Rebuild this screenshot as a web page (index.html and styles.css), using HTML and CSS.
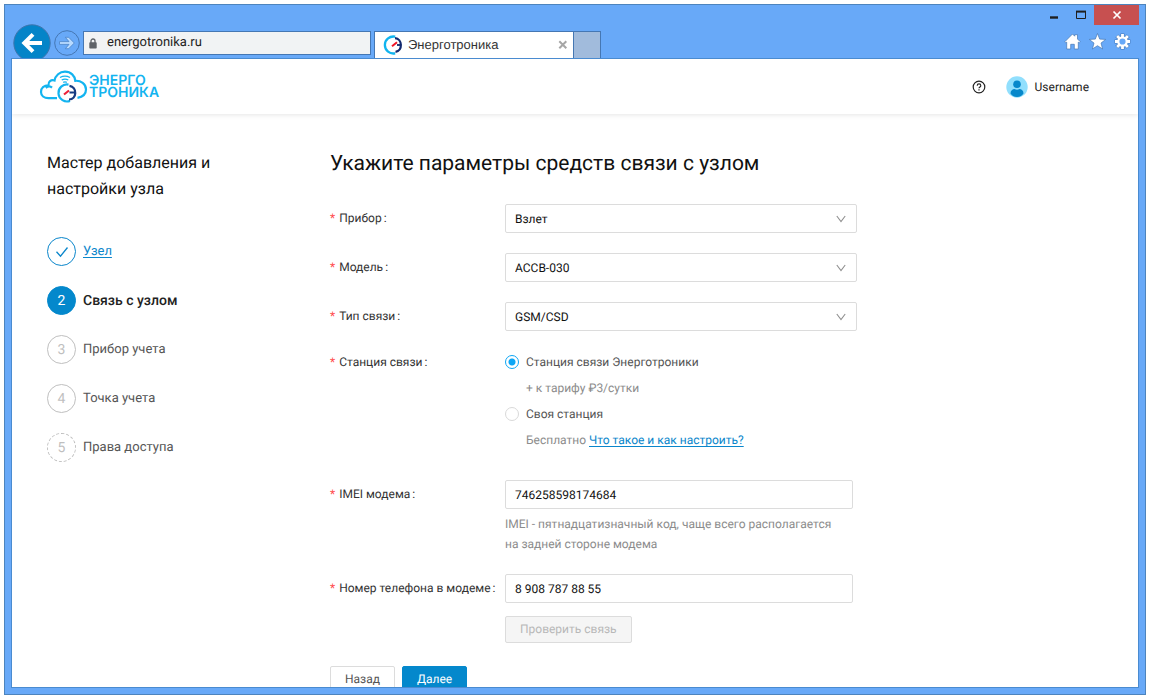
FILE: index.html
```html
<!DOCTYPE html>
<html lang="ru">
<head>
<meta charset="utf-8">
<meta name="viewport" content="width=device-width, initial-scale=1">
<title>Энерготроника</title>
<link rel="stylesheet" href="styles.css">
</head>
<body>
<div class="window">
  <div class="titlebar">
    <button class="win-btn" aria-label="Свернуть"><svg width="12" height="12" viewBox="0 0 12 12"><path d="M2 8.500h8" stroke="#1f1f1f" stroke-width="2.400"/></svg></button>
    <button class="win-btn" aria-label="Развернуть"><svg width="12" height="12" viewBox="0 0 12 12"><path d="M1.500 2.500h9v7h-9z" fill="none" stroke="#1f1f1f"/><path d="M1 2.600h10" stroke="#1f1f1f" stroke-width="2"/></svg></button>
    <button class="win-btn win-close" aria-label="Закрыть"><svg width="10" height="10" viewBox="0 0 10 10"><path d="M1.500 1.500l7 7M8.500 1.500l-7 7" stroke="#fff" stroke-width="1.700"/></svg></button>
  </div>
  <div class="toolbar">
    <button class="nav-btn" aria-label="Назад в истории"><svg width="38" height="38" viewBox="0 0 38 38"><circle cx="19" cy="19" r="18.200" fill="#0484c8" stroke="#3f75ad"/><path d="M29 19H11.500M20 10.300L11.300 19l8.700 8.700" fill="none" stroke="#fff" stroke-width="4"/></svg></button>
    <button class="nav-btn" aria-label="Вперёд"><svg width="26" height="26" viewBox="0 0 26 26"><circle cx="13" cy="13" r="12.300" fill="none" stroke="#4577b3"/><path d="M5.500 11.600h9.500l-3.700-4.300h3.400l5.600 5.700-5.600 5.700h-3.400l3.700-4.300H5.500z" fill="#b8daff" stroke="#4a83c6" stroke-width=".8"/></svg></button>
    <div class="address">
      <svg width="8" height="11" viewBox="0 0 8 11"><path d="M2 5V3a2 2 0 014 0v2" fill="none" stroke="#5f6368" stroke-width="1.300"/><rect x=".3" y="4.300" width="7.400" height="6.200" rx=".8" fill="#5f6368"/></svg>
      <input class="address-input" type="text" value="energotronika.ru" aria-label="Адрес">
    </div>
    <div class="tab">
      <svg width="20" height="20" viewBox="0 0 20 20" fill="none"><path d="M12.200 1.700A8.500 8.500 0 1012.200 18.300" stroke="#10b4ef" stroke-width="2.300"/><path d="M12 3.200C19.500 3.500 20 16 12.500 16.800" stroke="#12296f" stroke-width="2.200"/><path d="M14 10H18" stroke="#12296f" stroke-width="1.800"/><path d="M9 11.200l5-4" stroke="#f01525" stroke-width="2"/></svg>
      <span class="tab-title">Энерготроника</span>
      <button class="tab-close" aria-label="Закрыть вкладку"><svg width="10" height="10" viewBox="0 0 10 10"><path d="M1.300 1.300l7 7M8.300 1.300l-7 7" stroke="#a6a6a6" stroke-width="2"/></svg></button>
    </div>
    <button class="tab-new" aria-label="Новая вкладка"></button>
    <div class="tools">
      <button class="nav-btn" aria-label="Домой"><svg width="17" height="17" viewBox="0 0 17 17"><path d="M.8 8.800L8.500 1l2.200 2.200V1.700h2.800V6l2.800 2.800-1.100 1.100-.9-.8v6.900h-4v-4.700H6.700V16h-4V9.100l-.9.800z" fill="#fff" stroke="#4577b3" stroke-width=".7"/></svg></button>
      <button class="nav-btn" aria-label="Избранное"><svg width="17" height="17" viewBox="0 0 17 17"><path d="M8.500.500l2.200 5.600 6 .3-4.700 3.700 1.600 5.900-5.100-3.300L3.400 16 5 10.100.3 6.400l6-.3z" fill="#fff" stroke="#4577b3" stroke-width=".7"/></svg></button>
      <button class="nav-btn" aria-label="Настройки"><svg width="17" height="17" viewBox="0 0 17 17"><g stroke="#4577b3" stroke-width="4"><path d="M8.500.6v15.800M.6 8.500h15.800M2.800 2.800l11.400 11.400M14.200 2.800L2.800 14.200"/></g><g stroke="#fff" stroke-width="2.800"><path d="M8.500 1v15M1 8.500h15M3.100 3.100l10.800 10.800M13.900 3.100L3.100 13.900"/></g><circle cx="8.500" cy="8.500" r="4.200" fill="#68a9f8" stroke="#fff" stroke-width="2.200"/></svg></button>
    </div>
  </div>
  <div class="page">
    <header class="header">
      <a class="logo" href="#" aria-label="Энерготроника">
        <svg width="50" height="34" viewBox="0 0 50 34" fill="none"><path d="M18 28.200H9.500C5 28.200 2 25.500 2 22c0-4 3-6.600 7.500-6.600C9 11.500 12 9.500 15.500 10.500 16.500 5.500 20.500 1.700 26 1.700c6 0 9.800 4 10.300 9.100 5.500-.4 10.700 3 10.700 8.700 0 4.500-3.200 7.400-8.500 8.300M6.800 17.800c2.300-1.700 4.500-1.800 6.200-.2" stroke="#13b4f0" stroke-width="2.200"/><path d="M21 7.500q5-2.800 10 0M22.700 10q3.300-1.900 6.600 0M24.200 12.300q1.800-.9 3.600 0" stroke="#13b4f0" stroke-width="1.300"/><path d="M29.500 14.600A8.500 8.500 0 1031 30.900" stroke="#13b4f0" stroke-width="2.200"/><path d="M30.500 15.800C38.500 17 38 29.500 30 29.500M30.500 22.500H36" stroke="#173c82" stroke-width="2.200"/><path d="M25 24.500l5-4" stroke="#ee2037" stroke-width="2.200"/></svg>
        <span class="logo-text"><span>ЭНЕРГО</span><span>ТРОНИКА</span></span>
      </a>
      <div class="account">
        <button class="help" aria-label="Справка"><svg width="14" height="14" viewBox="0 0 14 14" fill="none" stroke="#222"><circle cx="7" cy="7" r="5.800" stroke-width="1.200"/><path d="M5.200 5.700c0-2.400 3.600-2.400 3.600 0C8.800 7 7 6.900 7 8.300" stroke-width="1.100"/><path d="M7 9.200v1.200" stroke-width="1.200"/></svg></button>
        <a class="user" href="#"><svg width="22" height="22" viewBox="0 0 22 22"><circle cx="11" cy="11" r="10.700" fill="#91dffd"/><circle cx="11" cy="8.200" r="3.800" fill="#0788cb"/><path d="M4.500 17.500c0-3 2-4.500 4-4.500 1.700 1 3.300 1 5 0 2 0 4 1.500 4 4.500-1 1.700-3.500 3.500-6.500 3.500s-5.500-1.800-6.500-3.500z" fill="#0788cb"/></svg>Username</a>
      </div>
    </header>
    <div class="layout">
      <aside class="sidebar">
        <h2 class="side-title">Мастер добавления и настройки узла</h2>
        <ol class="steps">
          <li class="step step-done"><span class="step-num"><svg width="14" height="12" viewBox="0 0 14 12"><path d="M1.500 5.800l4 4.400 7-8.700" fill="none" stroke="#0a86cb" stroke-width="1.300"/></svg></span><a class="link" href="#">Узел</a></li>
          <li class="step step-active"><span class="step-num">2</span>Связь с узлом</li>
          <li class="step"><span class="step-num">3</span>Прибор учета</li>
          <li class="step"><span class="step-num">4</span>Точка учета</li>
          <li class="step step-last"><span class="step-num">5</span>Права доступа</li>
        </ol>
      </aside>
      <main class="main">
        <h1 class="title">Укажите параметры средств связи с узлом</h1>
        <form class="form">
          <div class="row">
            <label class="label" for="device">Прибор</label>
            <div class="select-wrap"><select class="control" id="device"><option>Взлет</option></select><svg class="chevron" width="10" height="8" viewBox="0 0 10 8"><path d="M.8 1L5 6.500 9.200 1" fill="none" stroke="#8f8f8f" stroke-width="1.100"/></svg></div>
          </div>
          <div class="row">
            <label class="label" for="model">Модель</label>
            <div class="select-wrap"><select class="control" id="model"><option>АССВ-030</option></select><svg class="chevron" width="10" height="8" viewBox="0 0 10 8"><path d="M.8 1L5 6.500 9.200 1" fill="none" stroke="#8f8f8f" stroke-width="1.100"/></svg></div>
          </div>
          <div class="row">
            <label class="label" for="link-type">Тип связи</label>
            <div class="select-wrap"><select class="control" id="link-type"><option>GSM/CSD</option></select><svg class="chevron" width="10" height="8" viewBox="0 0 10 8"><path d="M.8 1L5 6.500 9.200 1" fill="none" stroke="#8f8f8f" stroke-width="1.100"/></svg></div>
          </div>
          <div class="row row-radio" role="radiogroup" aria-labelledby="station-label">
            <span class="label" id="station-label">Станция связи</span>
            <div class="radios">
              <label class="radio"><input class="radio-input" type="radio" name="station" checked>Станция связи Энерготроники</label>
              <p class="note">+ к тарифу ₽3/сутки</p>
              <label class="radio"><input class="radio-input" type="radio" name="station">Своя станция</label>
              <p class="note">Бесплатно <a class="link" href="#">Что такое и как настроить?</a></p>
            </div>
          </div>
          <div class="row">
            <label class="label" for="imei">IMEI модема</label>
            <div class="field">
              <input class="control" id="imei" type="text" value="746258598174684">
              <p class="hint">IMEI - пятнадцатизначный код, чаще всего располагается на задней стороне модема</p>
            </div>
          </div>
          <div class="row">
            <label class="label" for="phone">Номер телефона в модеме</label>
            <div class="field">
              <input class="control" id="phone" type="tel" value="8 908 787 88 55">
              <button class="btn btn-check" type="button" disabled>Проверить связь</button>
            </div>
          </div>
          <div class="actions">
            <button class="btn" type="button">Назад</button>
            <button class="btn btn-primary" type="button">Далее</button>
          </div>
        </form>
      </main>
    </div>
  </div>
</div>
</body>
</html>
```
FILE: styles.css
```css
* { box-sizing: border-box; }

body {
  margin: 0;
  padding: 4px 4px 0;
  height: 100vh;
  overflow: hidden;
  background: #fff;
  color: #222;
  font: 12px/20px Roboto, "Noto Sans", sans-serif;
  text-rendering: geometricPrecision;
}

h1, h2, p, ol { margin: 0; padding: 0; font-weight: 400; }
button, input, select { font: inherit; color: inherit; margin: 0; text-rendering: inherit; }
svg { display: block; flex: none; }

/* Browser window */
.window {
  display: flex;
  flex-direction: column;
  height: 100%;
  padding: 0 6px 6px;
  background: #68a9f8;
  border: 1px solid #4d84bd;
}
.titlebar { display: flex; justify-content: flex-end; height: 20px; flex: none; }
.win-btn {
  display: grid;
  place-items: center;
  width: 27px;
  padding: 0;
  border: 0;
  background: none;
}
.win-close { width: 45px; background: #c75050; }
.toolbar {
  display: flex;
  align-items: flex-end;
  flex: none;
  height: 33px;
  padding-left: 2px;
}
.nav-btn { padding: 0; border: 0; background: none; align-self: flex-start; }
.toolbar > .nav-btn { margin-right: 3px; }
.toolbar > .nav-btn:first-child { margin-top: -1px; height: 34px; overflow: hidden; }
.toolbar > .nav-btn:nth-child(2) { margin-top: 5px; }
.address {
  display: flex;
  align-items: center;
  gap: 10px;
  flex: 0 1 288px;
  height: 24px;
  margin: 0 3px 3px 0;
  padding: 0 5px;
  background: #f1f3f4;
  border: 1px solid #4577b3;
}
.address-input { flex: 1; min-width: 0; padding: 0; border: 0; background: none; font-size: 13px; outline: 0; }
.tab {
  display: flex;
  align-items: center;
  flex: 0 1 200px;
  height: 27px;
  padding: 0 5px 0 8px;
  background: #fff;
  border: 1px solid #4577b3;
  border-bottom: 0;
}
.tab-title { flex: 1; margin-left: 5px; font: 13px/20px "Liberation Sans", Arial, sans-serif; color: #333; }
.tab-close { padding: 0; border: 0; background: none; }
.tab-new { width: 27px; height: 27px; padding: 0; background: #a1bbdc; border: 1px solid #4577b3; border-width: 1px 1px 0 0; }
.tools { display: flex; gap: 8px; margin-left: auto; padding: 0 8px 8px 0; }

/* Site */
.page {
  flex: 1;
  min-height: 0;
  overflow: hidden;
  background: #fff;
  border: 1px solid #4a8bd0;
}
.header {
  display: flex;
  align-items: center;
  justify-content: space-between;
  height: 55px;
  padding: 0 49px 0 27px;
  box-shadow: 0 1px 5px rgba(0, 0, 0, .1);
}
.logo { display: flex; align-items: center; color: #13b4f0; text-decoration: none; }
.logo-text { display: grid; font: 600 14px/12px Inter, Roboto, sans-serif; }
.account { display: flex; align-items: center; gap: 20px; }
.help { padding: 0; border: 0; background: none; }
.user { display: flex; align-items: center; gap: 7px; color: #222; text-decoration: none; }

.layout { display: grid; grid-template-columns: 283px 1fr; padding: 36px 35px 0; }
.side-title { width: 190px; color: #111; font-size: 16px; line-height: 26px; }
.steps { display: grid; gap: 20px; margin-top: 35px; list-style: none; }
.step { display: flex; align-items: center; gap: 7px; color: #555; font-size: 13px; line-height: 28px; }
.step-num {
  display: grid;
  place-items: center;
  width: 29px;
  height: 29px;
  border: 1px solid #bfbfbf;
  border-radius: 50%;
  color: #bfbfbf;
  font-size: 14px;
}
.step-done .step-num { border-color: #0a86cb; }
.step-active { color: #222; font-size: 14px; font-weight: 500; }
.step-active .step-num { background: #0488cc; border-color: #0488cc; color: #fff; font-weight: 400; }
.step-last .step-num { border-style: dashed; }
.link { color: #0a86cb; text-decoration: underline; text-decoration-thickness: 1px; text-underline-offset: 2px; }

.title { color: #111; font-size: 21px; line-height: 28px; }
.form { margin-top: 26px; }
.row { display: grid; grid-template-columns: 175px 1fr; margin-bottom: 20px; }
.label { line-height: 28px; color: #333; white-space: nowrap; }
.label::before { content: "*"; margin-right: 4px; color: #ff4d4f; }
.label::after { content: ":"; margin-left: 2px; }
.control {
  display: block;
  width: 100%;
  height: 29px;
  padding: 0 9px;
  background: #fff;
  border: 1px solid #dcdcdc;
  border-radius: 2px;
  color: #111;
  appearance: none;
  outline: 0;
}
.select-wrap { display: grid; align-items: center; max-width: 352px; }
.select-wrap > * { grid-area: 1 / 1; }
.chevron { justify-self: end; margin-right: 11px; pointer-events: none; }
.field { max-width: 348px; }

.row-radio { margin: -2px 0 27px; }
.row-radio .label, .radio, .note { line-height: 26px; }
.radio { display: flex; align-items: center; gap: 7px; color: #555; }
.radio-input {
  width: 14px;
  height: 14px;
  border: 1px solid #d9d9d9;
  border-radius: 50%;
  appearance: none;
}
.radio-input:checked { border-color: #0da6f5; background: radial-gradient(circle, #0da6f5 3px, #fff 4px); }
.note { padding-left: 21px; color: #8c8c8c; }
.hint { margin-top: 5px; padding-right: 12px; color: #8c8c8c; }

.btn {
  height: 27px;
  padding: 0 14px;
  background: #fff;
  border: 1px solid #dcdcdc;
  border-radius: 2px;
  color: #555;
  line-height: 25px;
}
.btn-check { display: block; margin-top: 13px; background: #f5f5f5; color: #b8b8b8; }
.btn-primary { background: #0488cc; border-color: #0488cc; color: #fff; }
.actions { display: flex; gap: 7px; margin-top: 23px; }
```
